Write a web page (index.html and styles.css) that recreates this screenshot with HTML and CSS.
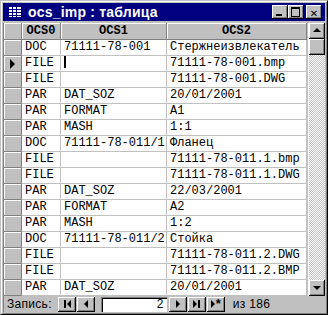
FILE: index.html
```html
<!DOCTYPE html>
<html lang="ru">
<head>
  <meta charset="UTF-8" />
  <title>ocs_imp : таблица</title>
  <link rel="stylesheet" href="styles.css">
</head>
<body>
  <div class="window">
    <div class="title-bar">
      <svg class="title-icon" width="14" height="12" viewBox="0 0 14 12">
        <rect x="0.5" y="0.5" width="13" height="11" fill="#fff" stroke="#fff"/>
        <path d="M0 0.5H14M0 3.5H14M0 6.5H14M0 9.5H14M0 11.5H14M0.5 0V12M4.5 0V12M8.5 0V12M13.5 0V12" stroke="#000080" stroke-width="1"/>
      </svg>
      <span class="title-text">ocs_imp : таблица</span>
      <div class="title-buttons">
        <button class="tb-btn"><span class="ico-min"></span></button>
        <button class="tb-btn"><span class="ico-max"></span></button>
        <button class="tb-btn close"><span class="ico-close">✕</span></button>
      </div>
    </div>

    <div class="client">
      <div class="grid-area">
        <div class="sheet" id="sheet">
          <div class="sel hdr"></div>
          <div class="hcell">OCS0</div>
          <div class="hcell">OCS1</div>
          <div class="hcell">OCS2</div>
        </div>
        <div class="vscroll">
          <div class="sb-btn"><span class="arrow-up"></span></div>
          <div class="sb-thumb"></div>
          <div class="sb-track"></div>
          <div class="sb-btn"><span class="arrow-down"></span></div>
        </div>
      </div>

      <div class="nav-bar">
        <span class="nav-label">Запись:</span>
        <button class="nav-btn"><span class="i-bar"></span><span class="i-left"></span></button>
        <button class="nav-btn"><span class="i-left"></span></button>
        <div class="nav-field">2</div>
        <button class="nav-btn"><span class="i-right"></span></button>
        <button class="nav-btn"><span class="i-right"></span><span class="i-bar"></span></button>
        <button class="nav-btn"><span class="i-right"></span><span class="i-star">*</span></button>
        <span class="nav-total">из 186</span>
      </div>
    </div>
  </div>

  <script>
    // строки таблицы ocs_imp
    const rows = [
      ['DOC', '71111-78-001', 'Стержнеизвлекатель'],
      ['FILE', '', '71111-78-001.bmp'],
      ['FILE', '', '71111-78-001.DWG'],
      ['PAR', 'DAT_SOZ', '20/01/2001'],
      ['PAR', 'FORMAT', 'A1'],
      ['PAR', 'MASH', '1:1'],
      ['DOC', '71111-78-011/1', 'Фланец'],
      ['FILE', '', '71111-78-011.1.bmp'],
      ['FILE', '', '71111-78-011.1.DWG'],
      ['PAR', 'DAT_SOZ', '22/03/2001'],
      ['PAR', 'FORMAT', 'A2'],
      ['PAR', 'MASH', '1:2'],
      ['DOC', '71111-78-011/2', 'Стойка'],
      ['FILE', '', '71111-78-011.2.DWG'],
      ['FILE', '', '71111-78-011.2.BMP'],
      ['PAR', 'DAT_SOZ', '20/01/2001']
    ];
    const current = 1;

    const sheet = document.getElementById('sheet');
    rows.forEach((row, i) => {
      const sel = document.createElement('div');
      sel.className = 'sel';
      if (i === current) sel.innerHTML = '<span class="pointer"></span>';
      sheet.appendChild(sel);
      row.forEach((val, j) => {
        const cell = document.createElement('div');
        cell.className = 'cell';
        cell.textContent = val;
        if (i === current && j === 1) cell.innerHTML = '<span class="caret"></span>';
        sheet.appendChild(cell);
      });
    });
  </script>
</body>
</html>
```

FILE: styles.css
```css
body { margin: 0; background: #fff; }
.window { box-sizing: border-box; width: 328px; height: 315px; background: #c0c0c0; border: 1px solid; border-color: #c0c0c0 #000 #000 #c0c0c0; box-shadow: inset 1px 1px #fff, inset -1px -1px #808080; padding: 2px; display: flex; flex-direction: column; }
.title-bar { height: 18px; flex: none; background: #000080; display: flex; align-items: center; padding: 0 3px 0 5px; }
.title-icon { margin-right: 6px; }
.title-text { color: #fff; font-family: "Liberation Sans", Arial, sans-serif; font-weight: bold; font-size: 14px; letter-spacing: 0.2px; flex: 1; }
.title-buttons { display: flex; }
.tb-btn { width: 16px; height: 14px; padding: 0; margin: 0; border: none; background: #c0c0c0; box-shadow: inset -1px -1px #000, inset 1px 1px #fff, inset -2px -2px #808080; position: relative; }
.tb-btn.close { margin-left: 2px; }
.ico-min { position: absolute; left: 4px; top: 9px; width: 6px; height: 2px; background: #000; }
.ico-max { position: absolute; left: 3px; top: 2px; width: 7px; height: 7px; border: 1px solid #000; border-top-width: 2px; }
.ico-close { font-family: "DejaVu Sans", sans-serif; font-size: 10px; font-weight: bold; line-height: 14px; color: #000; }

.client { flex: 1; display: flex; flex-direction: column; margin-top: 2px; border-left: 1px solid #808080; }
.grid-area { display: flex; background: #fff; }
.sheet { display: grid; grid-template-columns: 18px 39px 106px 140px; grid-template-rows: 17px; grid-auto-rows: 16px; width: 303px; border-right: 1px solid #c0c0c0; }
.sheet > div { box-sizing: border-box; border-right: 1px solid #c0c0c0; border-bottom: 1px solid #c0c0c0; font-family: "Liberation Mono", "Courier New", monospace; font-size: 12px; line-height: 15px; white-space: nowrap; overflow: hidden; }
.sel { background: #c0c0c0; box-shadow: inset 1px 1px #fff; border-right-color: #808080 !important; border-bottom-color: #808080 !important; position: relative; }
.hcell { background: #c0c0c0; box-shadow: inset 1px 1px #fff; border-right-color: #808080 !important; border-bottom-color: #808080 !important; font-weight: bold; display: flex; align-items: center; justify-content: center; }
.cell { padding-left: 3px; color: #000; }
.pointer { position: absolute; left: 6px; top: 3px; border-left: 5px solid #000; border-top: 5px solid transparent; border-bottom: 5px solid transparent; }
.caret { display: inline-block; width: 2px; height: 12px; background: #000; vertical-align: -2px; }

.vscroll { width: 16px; margin-left: 1px; display: flex; flex-direction: column; }
.sb-btn { height: 16px; background: #c0c0c0; box-shadow: inset -1px -1px #000, inset 1px 1px #fff, inset -2px -2px #808080; position: relative; }
.sb-thumb { height: 16px; background: #c0c0c0; box-shadow: inset -1px -1px #000, inset 1px 1px #fff, inset -2px -2px #808080; }
.sb-track { flex: 1; background: repeating-conic-gradient(#c0c0c0 0 25%, #fff 0 50%) 0 0 / 2px 2px; }
.arrow-up { position: absolute; left: 4px; top: 5px; border-bottom: 4px solid #000; border-left: 4px solid transparent; border-right: 4px solid transparent; }
.arrow-down { position: absolute; left: 4px; top: 6px; border-top: 4px solid #000; border-left: 4px solid transparent; border-right: 4px solid transparent; }

.nav-bar { flex: 1; display: flex; align-items: center; padding-left: 3px; font-family: "Liberation Sans", Arial, sans-serif; font-size: 12px; letter-spacing: 0.3px; }
.nav-label { margin-right: 6px; }
.nav-btn { width: 18px; height: 15px; padding: 0; margin: 0 1px 0 0; border: none; background: #c0c0c0; box-shadow: inset -1px -1px #000, inset 1px 1px #fff, inset -2px -2px #808080; display: flex; align-items: center; justify-content: center; }
.i-left { border-right: 4px solid #000; border-top: 4px solid transparent; border-bottom: 4px solid transparent; }
.i-right { border-left: 4px solid #000; border-top: 4px solid transparent; border-bottom: 4px solid transparent; }
.i-bar { width: 2px; height: 8px; background: #000; margin: 0 1px; }
.i-star { font-family: "Liberation Sans", Arial, sans-serif; font-size: 13px; font-weight: bold; line-height: 8px; height: 8px; margin-left: 1px; }
.nav-field { width: 66px; height: 15px; box-sizing: border-box; margin: 0 2px 0 5px; background: #fff; box-shadow: inset 1px 1px #808080, inset 2px 2px #000; text-align: right; padding-right: 3px; line-height: 15px; }
.nav-total { margin-left: 7px; }
```
